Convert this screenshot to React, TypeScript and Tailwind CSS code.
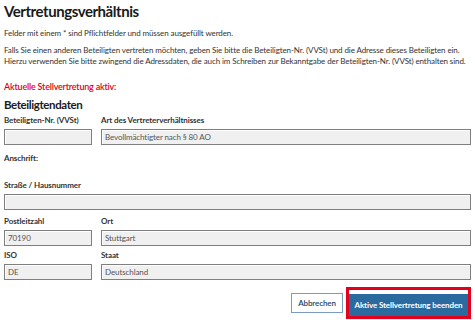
import React from "react";

const font = { fontFamily: "Lato, 'Open Sans', sans-serif" };

function Field({ value = "", className = "" }: { value?: string; className?: string }) {
  return (
    <div
      className={`h-[16px] border border-[#7f7f7f] bg-[#f0f0f0] shadow-[inset_1px_1px_0_#ffffff] px-[3px] text-[8px] tracking-[-0.1px] leading-[14px] text-[#555] whitespace-nowrap ${className}`}
    >
      {value}
    </div>
  );
}

function Label({ children }: { children: React.ReactNode }) {
  return (
    <div className="text-[8px] tracking-[-0.1px] font-bold leading-[12px] text-[#333] mb-[3px] whitespace-nowrap">
      {children}
    </div>
  );
}

export default function App() {
  return (
    <div className="w-[475px] h-[320px] bg-white overflow-hidden px-[4px]" style={font}>
      <h1 className="text-[15px] tracking-[-0.45px] font-bold leading-[20px] text-[#1a1a1a] pt-[1px]">
        Vertretungsverhältnis
      </h1>
      <p className="text-[8px] tracking-[-0.1px] leading-[11px] text-[#333] mt-[7px] whitespace-nowrap">
        Felder mit einem * sind Pflichtfelder und müssen ausgefüllt werden.
      </p>
      <p className="text-[8px] tracking-[-0.1px] leading-[11px] text-[#333] mt-[6px] whitespace-nowrap">
        Falls Sie einen anderen Beteiligten vertreten möchten, geben Sie bitte die Beteiligten-Nr. (VVSt) und die Adresse dieses Beteiligten ein.
        <br />
        Hierzu verwenden Sie bitte zwingend die Adressdaten, die auch im Schreiben zur Bekanntgabe der Beteiligten-Nr. (VVSt) enthalten sind.
      </p>
      <div className="text-[9px] tracking-[-0.2px] font-semibold leading-[12px] text-[#e2001a] mt-[14px]">
        Aktuelle Stellvertretung aktiv:
      </div>
      <div className="text-[11.5px] tracking-[-0.4px] font-bold leading-[16px] text-[#1a1a1a] mt-[4px]">
        Beteiligtendaten
      </div>
      <div className="flex gap-[9px] mt-[1px]">
        <div className="w-[88px]">
          <Label>Beteiligten-Nr. (VVSt)</Label>
          <Field />
        </div>
        <div className="flex-1">
          <Label>Art des Vertreterverhältnisses</Label>
          <Field value="Bevollmächtigter nach § 80 AO" />
        </div>
      </div>
      <div className="mt-[7px]">
        <Label>Anschrift:</Label>
      </div>
      <div className="mt-[15px]">
        <Label>Straße / Hausnummer</Label>
        <Field />
      </div>
      <div className="flex gap-[9px] mt-[5px]">
        <div className="w-[88px]">
          <Label>Postleitzahl</Label>
          <Field value="70190" />
        </div>
        <div className="flex-1">
          <Label>Ort</Label>
          <Field value="Stuttgart" />
        </div>
      </div>
      <div className="flex gap-[9px] mt-[3px]">
        <div className="w-[88px]">
          <Label>ISO</Label>
          <Field value="DE" />
        </div>
        <div className="flex-1">
          <Label>Staat</Label>
          <Field value="Deutschland" />
        </div>
      </div>
      <div className="flex justify-end items-center gap-[3px] mt-[7px]">
        <button className="h-[20px] w-[52px] border border-[#7a9cc0] bg-white text-[8px] tracking-[-0.1px] font-semibold text-[#1f3f66]">
          Abbrechen
        </button>
        <div className="border-[3px] border-[#e2001a]">
          <button className="h-[22px] w-[119px] bg-[#2b6a9f] text-[8px] tracking-[-0.1px] font-bold text-white whitespace-nowrap">
            Aktive Stellvertretung beenden
          </button>
        </div>
      </div>
    </div>
  );
}
